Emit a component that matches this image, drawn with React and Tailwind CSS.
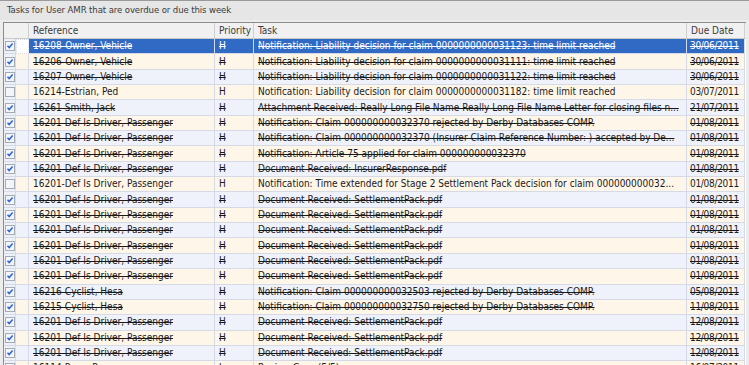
import React from 'react';

const LIAB = 'Notification: Liability decision for claim ';
const DOC = 'Document Received: SettlementPack.pdf';
const DEF = '16201-Def Is Driver, Passenger';

const rows = [
  { ref: '16208-Owner, Vehicle', pri: 'H', task: LIAB + '0000000000031123: time limit reached', due: '30/06/2011', done: true },
  { ref: '16206-Owner, Vehicle', pri: 'H', task: LIAB + '0000000000031111: time limit reached', due: '30/06/2011', done: true },
  { ref: '16207-Owner, Vehicle', pri: 'H', task: LIAB + '0000000000031122: time limit reached', due: '30/06/2011', done: true },
  { ref: '16214-Estrian, Ped', pri: 'H', task: LIAB + '0000000000031182: time limit reached', due: '03/07/2011', done: false },
  { ref: '16261-Smith, Jack', pri: 'H', task: 'Attachment Received: Really Long File Name Really Long File Name Letter for closing files n...', due: '21/07/2011', done: true },
  { ref: DEF, pri: 'H', task: 'Notification: Claim 000000000032370  rejected by Derby Databases COMP.', due: '01/08/2011', done: true },
  { ref: DEF, pri: 'H', task: 'Notification: Claim 000000000032370 (Insurer Claim Reference Number: ) accepted by De...', due: '01/08/2011', done: true },
  { ref: DEF, pri: 'H', task: 'Notification: Article 75 applied for claim 000000000032370', due: '01/08/2011', done: true },
  { ref: DEF, pri: 'H', task: 'Document Received: InsurerResponse.pdf', due: '01/08/2011', done: true },
  { ref: DEF, pri: 'H', task: 'Notification: Time extended for Stage 2 Settlement Pack decision for claim 000000000032...', due: '01/08/2011', done: false },
  { ref: DEF, pri: 'H', task: DOC, due: '01/08/2011', done: true },
  { ref: DEF, pri: 'H', task: DOC, due: '01/08/2011', done: true },
  { ref: DEF, pri: 'H', task: DOC, due: '01/08/2011', done: true },
  { ref: DEF, pri: 'H', task: DOC, due: '01/08/2011', done: true },
  { ref: DEF, pri: 'H', task: DOC, due: '01/08/2011', done: true },
  { ref: DEF, pri: 'H', task: DOC, due: '01/08/2011', done: true },
  { ref: '16216-Cyclist, Hesa', pri: 'H', task: 'Notification: Claim 000000000032503  rejected by Derby Databases COMP.', due: '05/08/2011', done: true },
  { ref: '16215-Cyclist, Hesa', pri: 'H', task: 'Notification: Claim 000000000032750  rejected by Derby Databases COMP.', due: '11/08/2011', done: true },
  { ref: DEF, pri: 'H', task: DOC, due: '12/08/2011', done: true },
  { ref: DEF, pri: 'H', task: DOC, due: '12/08/2011', done: true },
  { ref: DEF, pri: 'H', task: DOC, due: '12/08/2011', done: true },
  { ref: '16114-Pogo, Pop', pri: 'L', task: 'Review Case (5/5)', due: '16/07/2011', done: false },
];

function CheckBox({ checked }) {
  return (
    <svg width="10" height="10" viewBox="0 0 10 10" className="block">
      <rect x="0.5" y="0.5" width="9" height="9" fill="#f4f5f8" stroke="#a4abb8" />
      {checked && (
        <path d="M2.5 4.8 L4.2 6.6 L7.6 2.6" fill="none" stroke="#2d63d8" strokeWidth="1.5" />
      )}
    </svg>
  );
}

export default function App() {
  return (
    <div
      className="w-[749px] h-[365px] overflow-hidden bg-[#ececec] text-[#1a1a1a]"
      style={{ fontFamily: '"DejaVu Sans Condensed", "Liberation Sans", sans-serif' }}
    >
      <div className="h-[20px] border-t border-[#9a9a9a] bg-[#e6e6e6] pl-[7px] flex items-center text-[9.5px] tracking-[-0.1px] text-[#3a3a3a]">
        Tasks for User AMR that are overdue or due this week
      </div>
      <div className="mt-[2px] ml-[3px] w-[743px] border-l border-t border-[#8c8c8c] bg-white">
        <div className="flex h-[16px] border-b border-[#c9c9c9] bg-[#f1f1f1] text-[10px] text-[#3a3a3a]">
          <div className="w-[25px] border-r border-[#cfcfcf]" />
          <div className="w-[186px] pl-[4px] border-r border-[#cfcfcf] flex items-center">Reference</div>
          <div className="w-[39px] pl-[4px] border-r border-[#cfcfcf] flex items-center">Priority</div>
          <div className="w-[433px] pl-[4px] border-r border-[#cfcfcf] flex items-center">Task</div>
          <div className="w-[58px] pl-[4px] border-r border-[#cfcfcf] flex items-center">Due Date</div>
        </div>
        {rows.map((r, i) => {
          const selected = i === 0;
          const bg = selected ? 'bg-[#316ac5] text-white' : i % 2 === 1 ? 'bg-[#fff6ea]' : 'bg-[#f0f2fb]';
          const strike = r.done ? 'line-through' : '';
          return (
            <div key={i} className="flex h-[15.35px] text-[10px] leading-none">
              <div className="w-[12px] bg-[#eef0f7] border-r border-b border-[#d6dae6] flex items-center justify-center">
                <CheckBox checked={r.done} />
              </div>
              <div className={`w-[13px] border-r border-b border-[#d6dae6] ${selected ? 'bg-white border border-dotted border-[#555]' : bg}`} />
              <div className={`w-[186px] pl-[4px] border-r border-b border-[#d6dae6] flex items-center whitespace-nowrap overflow-hidden ${bg} ${strike}`}>
                {r.ref}
              </div>
              <div className={`w-[39px] pl-[4px] border-r border-b border-[#d6dae6] flex items-center ${bg} ${strike}`}>
                {r.pri}
              </div>
              <div className={`w-[433px] pl-[4px] border-r border-b border-[#d6dae6] flex items-center whitespace-nowrap overflow-hidden ${bg} ${strike}`}>
                {r.task}
              </div>
              <div className={`w-[58px] pl-[3px] border-r border-b border-[#d6dae6] flex items-center whitespace-nowrap tracking-[-0.3px] ${bg} ${strike}`}>
                {r.due}
              </div>
            </div>
          );
        })}
      </div>
    </div>
  );
}
